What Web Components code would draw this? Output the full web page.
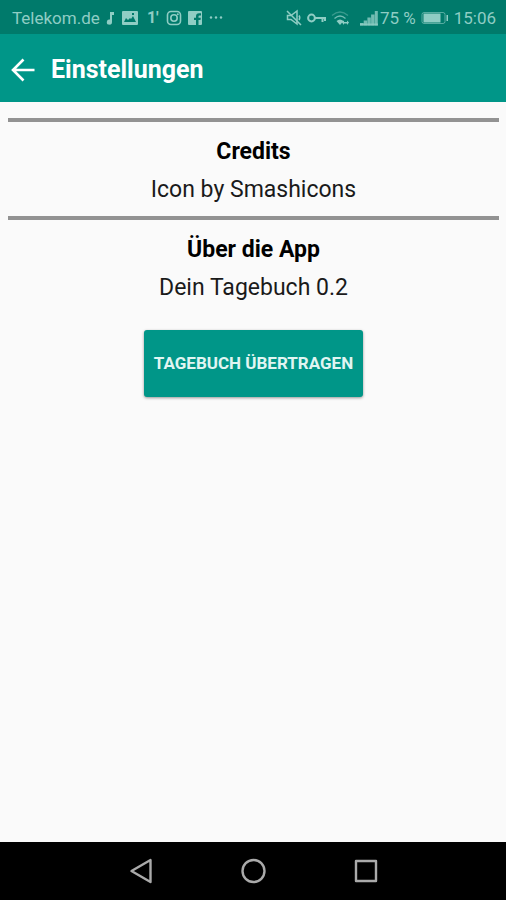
<!DOCTYPE html>
<html lang="de">
<head>
<meta charset="UTF-8">
<meta name="viewport" content="width=device-width, initial-scale=1.0">
<title>Einstellungen</title>
<style>
    body {
        margin: 0;
        font-family: Roboto, "Liberation Sans", sans-serif;
        background-color: #fafafa;
    }
</style>
</head>
<body>
<app-pantalla>
    <status-bar slot="status" anbieter="Telekom.de" akku="75 %" zeit="15:06"></status-bar>
    <app-toolbar slot="toolbar" titel="Einstellungen"></app-toolbar>
    <info-section titel="Credits">Icon by Smashicons</info-section>
    <info-section titel="Über die App">Dein Tagebuch 0.2</info-section>
    <app-button>Tagebuch übertragen</app-button>
    <nav-bar slot="nav"></nav-bar>
</app-pantalla>

<script>
class Pantalla extends HTMLElement {
    constructor() {
        super();
        this.attachShadow({ mode: 'open' });
    }

    connectedCallback() {
        this.shadowRoot.innerHTML = `
            <style>
                :host {
                    display: flex;
                    flex-direction: column;
                    min-height: 100vh;
                }

                main {
                    flex: 1;
                    display: flex;
                    flex-direction: column;
                    padding: 16px 7px 16px 8px;
                }
            </style>

            <slot name="status"></slot>
            <slot name="toolbar"></slot>
            <main><slot></slot></main>
            <slot name="nav"></slot>
        `;
    }
}

class StatusBar extends HTMLElement {
    constructor() {
        super();
        this.attachShadow({ mode: 'open' });
    }

    connectedCallback() {
        const anbieter = this.getAttribute('anbieter');
        const akku = this.getAttribute('akku');
        const zeit = this.getAttribute('zeit');

        this.shadowRoot.innerHTML = `
            <style>
                :host {
                    display: flex;
                    align-items: center;
                    justify-content: space-between;
                    box-sizing: border-box;
                    height: 34px;
                    padding: 2px 10px 0 12px;
                    background-color: #007a6b;
                    color: #8fcdc4;
                    font-size: 17px;
                    line-height: 20px;
                    white-space: nowrap;
                }

                .gruppe {
                    display: flex;
                    align-items: center;
                    gap: 5px;
                }

                .eins {
                    width: 16px;
                    font-size: 16px;
                    font-weight: bold;
                    text-align: center;
                }

                .signal {
                    display: flex;
                    align-items: center;
                    gap: 2px;
                    margin-left: 6px;
                }

                svg {
                    display: block;
                    fill: currentColor;
                }
            </style>

            <div class="gruppe">
                <span>${anbieter}</span>
                <svg width="10" height="16" viewBox="0 0 10 16">
                    <path d="M5 2h4v3H7v7a2.600 2.600 0 1 1-2-2.500z"/>
                </svg>
                <svg width="20" height="16" viewBox="0 0 20 16">
                    <path fill-rule="evenodd" d="M3 1h14q1 0 1 1v12q0 1-1 1H3q-1 0-1-1V2q0-1 1-1zM4 12h12l-3-6-2 3-1-1-2 2-2-2zM12 3v2h2V3z"/>
                </svg>
                <span class="eins">1'</span>
                <svg width="16" height="16" viewBox="0 0 16 16">
                    <g fill="none" stroke="currentColor" stroke-width="1.600">
                        <rect x="1.500" y="1.500" width="13" height="13" rx="3.500"/>
                        <circle cx="8" cy="8" r="3.200"/>
                    </g>
                    <circle cx="11.800" cy="4.300" r="1"/>
                </svg>
                <svg width="16" height="16" viewBox="0 0 16 16">
                    <path d="M2 1h12q1 0 1 1v12q0 1-1 1h-2.500v-5h2l.3-2.300h-2.300V6.400q0-1 1-1h1.500V3.200h-2q-3 0-3 3v1.500h-2V10h2v5H2q-1 0-1-1V2q0-1 1-1z"/>
                </svg>
                <svg width="16" height="16" viewBox="0 0 16 16">
                    <circle cx="3" cy="7.500" r="1.200"/>
                    <circle cx="8" cy="7.500" r="1.200"/>
                    <circle cx="13" cy="7.500" r="1.200"/>
                </svg>
            </div>

            <div class="gruppe">
                <svg width="16" height="18" viewBox="0 0 16 18">
                    <g fill="none" stroke="currentColor" stroke-width="1.500">
                        <path d="M1.500 6.500h3.500l6-4.500v13l-6-4.500H1.500z"/>
                        <path d="M1 2l14 14M13 6.500q1.500 2 0 4.500"/>
                    </g>
                </svg>
                <svg width="19" height="16" viewBox="0 0 19 16">
                    <g fill="none" stroke="currentColor" stroke-width="2">
                        <circle cx="4.500" cy="8" r="3.400"/>
                        <path d="M8 8h11M15.500 8v4M18 8v3"/>
                    </g>
                </svg>
                <svg width="18" height="16" viewBox="0 0 18 16">
                    <g fill="none" stroke="currentColor" stroke-width="1.300">
                        <path d="M1 5.500q8-7 16 0" opacity=".4"/>
                        <path d="M3.500 8.500q5.500-5 11 0" opacity=".8"/>
                    </g>
                    <path d="M5.500 11q3.500-3 7 0L9 15zM11 12.500l2-2v1.500h3v-1.500l2 2-2 2.500v-1.500h-3V15z"/>
                </svg>
                <div class="signal">
                    <svg width="18" height="16" viewBox="0 0 18 16">
                        <path d="M0 13h3.400v2.500H0zM3.700 10.500h3.400v5H3.700zM7.400 7.500h3.400v8H7.400zM11.100 4.500h3.400v11h-3.400zM14.800 1h3v14.500h-3z" opacity=".8"/>
                        <path d="M0 13.500h18v2H0z" opacity=".8"/>
                    </svg>
                    <span>${akku}</span>
                </div>
                <svg width="28" height="14" viewBox="0 0 28 14">
                    <rect x="1" y="1.500" width="23" height="11" rx="2" fill="none" stroke="currentColor" stroke-opacity=".6"/>
                    <path d="M2.500 2.500h17v9h-17zM25.500 4h1.500v6h-1.500z"/>
                </svg>
                <span>${zeit}</span>
            </div>
        `;
    }
}

class Toolbar extends HTMLElement {
    constructor() {
        super();
        this.attachShadow({ mode: 'open' });
    }

    connectedCallback() {
        const titel = this.getAttribute('titel');

        this.shadowRoot.innerHTML = `
            <style>
                :host {
                    display: flex;
                    align-items: center;
                    gap: 16px;
                    box-sizing: border-box;
                    height: 68px;
                    padding: 3px 11px 0;
                    background-color: #009688;
                    color: #fff;
                }

                button {
                    padding: 0;
                    border: 0;
                    background: none;
                    color: inherit;
                    cursor: pointer;
                }

                svg {
                    display: block;
                }

                h1 {
                    margin: 0;
                    font-size: 25px;
                    line-height: 32px;
                    font-weight: bold;
                }
            </style>

            <button type="button" aria-label="Zurück">
                <svg width="24" height="24" viewBox="0 0 24 24" fill="none" stroke="currentColor" stroke-width="2.600">
                    <path d="M23.500 12H3M12.500 1.500L2 12l10.500 10.500"/>
                </svg>
            </button>
            <h1>${titel}</h1>
        `;
    }
}

class InfoSection extends HTMLElement {
    constructor() {
        super();
        this.attachShadow({ mode: 'open' });
    }

    connectedCallback() {
        const titel = this.getAttribute('titel');

        this.shadowRoot.innerHTML = `
            <style>
                :host {
                    display: block;
                    padding-bottom: 12px;
                    border-top: 4px solid #929292;
                    color: #1a1a1a;
                    text-align: center;
                }

                h2, p {
                    margin: 0;
                    font-size: 23px;
                    line-height: 28px;
                }

                h2 {
                    margin: 16px 0 10px;
                    color: #000;
                    font-weight: bold;
                }
            </style>

            <h2>${titel}</h2>
            <p><slot></slot></p>
        `;
    }
}

class AppButton extends HTMLElement {
    constructor() {
        super();
        this.attachShadow({ mode: 'open' });
    }

    connectedCallback() {
        this.shadowRoot.innerHTML = `
            <style>
                :host {
                    display: block;
                    margin-top: 16px;
                    text-align: center;
                }

                button {
                    padding: 22px 10px;
                    border: 0;
                    border-radius: 3px;
                    background-color: #009688;
                    box-shadow: 0 1px 3px rgba(0, 0, 0, 0.4);
                    color: #e0f5f2;
                    font-family: inherit;
                    font-size: 17px;
                    line-height: 23px;
                    font-weight: bold;
                    text-transform: uppercase;
                    cursor: pointer;
                }
            </style>

            <button type="button"><slot></slot></button>
        `;
    }
}

class NavBar extends HTMLElement {
    constructor() {
        super();
        this.attachShadow({ mode: 'open' });
    }

    connectedCallback() {
        this.shadowRoot.innerHTML = `
            <style>
                :host {
                    display: flex;
                    align-items: center;
                    justify-content: center;
                    gap: 86px;
                    height: 58px;
                    background-color: #000;
                    color: #aaa;
                }

                button {
                    padding: 0;
                    border: 0;
                    background: none;
                    color: inherit;
                    cursor: pointer;
                }

                svg {
                    display: block;
                    fill: none;
                    stroke: currentColor;
                    stroke-width: 2.400;
                    stroke-linejoin: round;
                }
            </style>

            <button type="button" aria-label="Zurück">
                <svg width="26" height="26" viewBox="0 0 26 26"><path d="M22.500 2v22L3.500 13z"/></svg>
            </button>
            <button type="button" aria-label="Startseite">
                <svg width="26" height="26" viewBox="0 0 26 26"><circle cx="13.500" cy="13" r="11"/></svg>
            </button>
            <button type="button" aria-label="Übersicht">
                <svg width="26" height="26" viewBox="0 0 26 26"><rect x="4" y="3" width="20" height="20"/></svg>
            </button>
        `;
    }
}

customElements.define('app-pantalla', Pantalla);
customElements.define('status-bar', StatusBar);
customElements.define('app-toolbar', Toolbar);
customElements.define('info-section', InfoSection);
customElements.define('app-button', AppButton);
customElements.define('nav-bar', NavBar);
</script>
</body>
</html>
